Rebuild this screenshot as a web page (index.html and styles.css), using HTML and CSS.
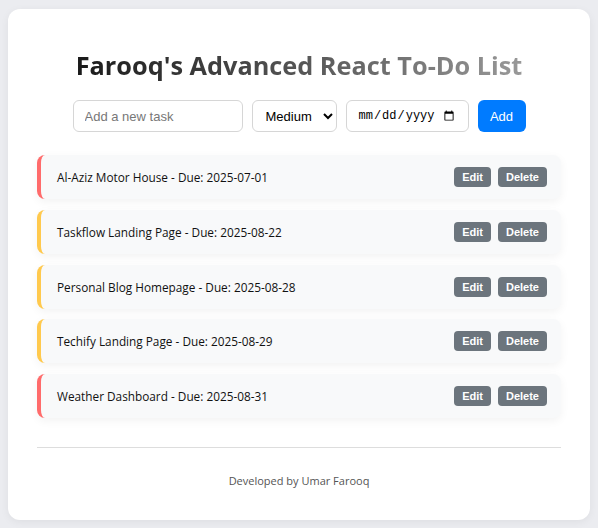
FILE: index.html
```html
<!DOCTYPE html>
<html>
<head>
<meta charset="utf-8">
<link rel="stylesheet" href="styles.css">
</head>
<body>
<div class="card">
  <h1 class="title">Farooq's Advanced React To-Do List</h1>
  <div class="form">
    <input class="task-input" type="text" placeholder="Add a new task">
    <select class="priority"><option>Medium</option></select>
    <input class="date" type="date">
    <button class="add">Add</button>
  </div>
  <ul class="list">
    <li class="item high"><span class="text">Al-Aziz Motor House - Due: 2025-07-01</span><span class="actions"><button class="btn">Edit</button><button class="btn">Delete</button></span></li>
    <li class="item medium"><span class="text">Taskflow Landing Page - Due: 2025-08-22</span><span class="actions"><button class="btn">Edit</button><button class="btn">Delete</button></span></li>
    <li class="item medium"><span class="text">Personal Blog Homepage - Due: 2025-08-28</span><span class="actions"><button class="btn">Edit</button><button class="btn">Delete</button></span></li>
    <li class="item medium"><span class="text">Techify Landing Page - Due: 2025-08-29</span><span class="actions"><button class="btn">Edit</button><button class="btn">Delete</button></span></li>
    <li class="item high"><span class="text">Weather Dashboard - Due: 2025-08-31</span><span class="actions"><button class="btn">Edit</button><button class="btn">Delete</button></span></li>
  </ul>
  <hr class="rule">
  <p class="footer">Developed by Umar Farooq</p>
</div>
</body>
</html>
```
FILE: styles.css
```css
html, body { margin: 0; padding: 0; }
body {
  background: #ebecf0;
  font-family: "Open Sans", "Noto Sans", sans-serif;
  padding: 9px 8px 8px 8px;
}
.card {
  background: #fff;
  border-radius: 12px;
  padding: 38px 29px 28px 29px;
  box-shadow: 0 2px 8px rgba(0,0,0,0.06);
  height: 445px;
}
.title {
  margin: 0 auto 16px auto;
  text-align: center;
  font-size: 25.3px;
  font-weight: 700;
  line-height: 37px;
  background: linear-gradient(90deg, #1a1a1a 0%, #555 50%, #999 100%);
  -webkit-background-clip: text;
  background-clip: text;
  color: transparent;
  width: max-content;
}
.form {
  display: flex;
  justify-content: center;
  gap: 9px;
  margin-bottom: 23px;
}
.task-input, .priority, .date {
  height: 32px;
  box-sizing: border-box;
  border: 1px solid #d6d6d6;
  border-radius: 6px;
  background: #fff;
  font-family: "Liberation Sans", Arial, sans-serif;
  font-size: 13px;
}
.task-input { width: 170px; padding: 0 11px; }
.task-input::placeholder { color: #777; }
.priority { width: 85px; padding: 0 4px 0 9px; color: #000; }
.date { width: 123px; padding: 0 11px; font-family: "Liberation Mono", monospace; font-size: 12px; }
.add {
  height: 32px;
  width: 48px;
  background: #007bff;
  color: #fff;
  border: none;
  border-radius: 6px;
  font-family: "Liberation Sans", Arial, sans-serif;
  font-size: 13px;
}
.list {
  list-style: none;
  margin: 0;
  padding: 0;
  display: flex;
  flex-direction: column;
  gap: 10.75px;
}
.item {
  display: flex;
  align-items: center;
  justify-content: space-between;
  height: 44px;
  box-sizing: border-box;
  background: #f8f9fa;
  border-left: 4px solid #ff6b6b;
  border-radius: 8px;
  padding: 0 14px 0 16px;
  box-shadow: 0 3px 10px rgba(0,0,0,0.05);
}
.item.medium { border-left-color: #ffc94d; }
.text { font-size: 11.8px; color: #111; }
.actions { display: flex; gap: 7px; }
.btn {
  height: 20px;
  padding: 0 8px;
  background: #6c757d;
  color: #fff;
  border: none;
  border-radius: 4px;
  font-family: "Liberation Sans", Arial, sans-serif;
  font-size: 11px;
  font-weight: 700;
}
.rule {
  border: none;
  border-top: 1px solid #ddd;
  margin: 29px 0 0 0;
}
.footer {
  text-align: center;
  font-size: 11px;
  color: #555;
  margin: 25px 0 0 0;
}
```
